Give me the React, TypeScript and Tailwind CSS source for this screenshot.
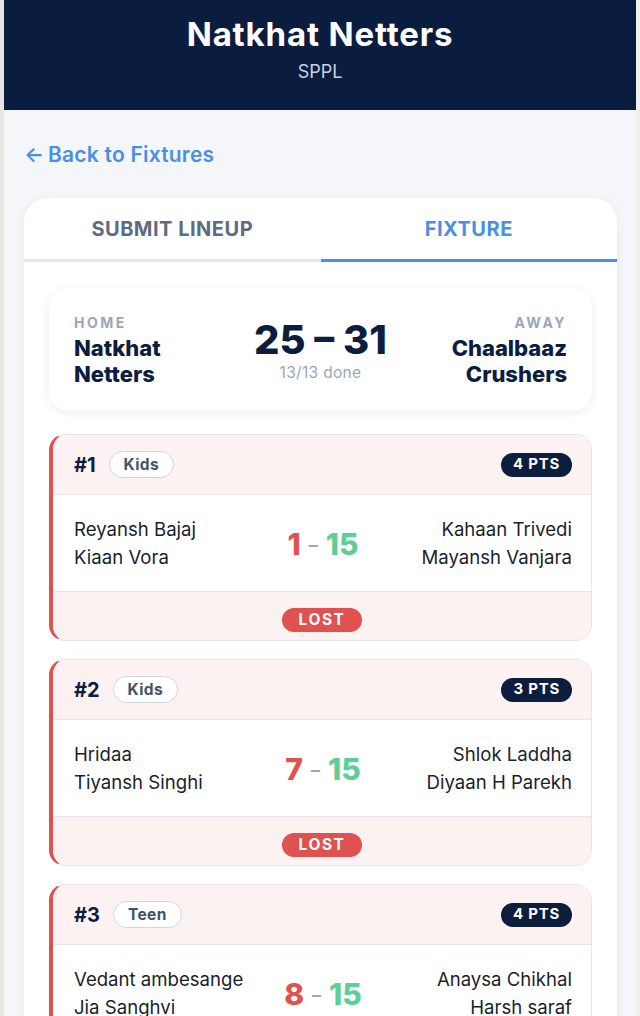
const FONT = { fontFamily: 'Inter, "Noto Sans", sans-serif' };

interface Match {
  no: number;
  cat: string;
  pts: number;
  home: string[];
  away: string[];
  hs: number;
  as: number;
  result: string;
}

const MATCHES: Match[] = [
  { no: 1, cat: 'Kids', pts: 4, home: ['Reyansh Bajaj', 'Kiaan Vora'], away: ['Kahaan Trivedi', 'Mayansh Vanjara'], hs: 1, as: 15, result: 'LOST' },
  { no: 2, cat: 'Kids', pts: 3, home: ['Hridaa', 'Tiyansh Singhi'], away: ['Shlok Laddha', 'Diyaan H Parekh'], hs: 7, as: 15, result: 'LOST' },
  { no: 3, cat: 'Teen', pts: 4, home: ['Vedant ambesange', 'Jia Sanghvi'], away: ['Anaysa Chikhal', 'Harsh saraf'], hs: 8, as: 15, result: 'LOST' },
];

function MatchCard({ m }: { m: Match }) {
  return (
    <div className="rounded-2xl border border-[#e2e6ee] border-l-4 border-l-[#e0524f] overflow-hidden bg-white">
      {/* header */}
      <div className="h-[60px] bg-[#fdf2f2] border-b border-[#e2e6ee] flex items-center pl-[21px] pr-[19px]">
        <span className="text-[20px] font-bold text-[#0c1d3d]">#{m.no}</span>
        <span className="ml-[13px] h-[27px] px-[14px] rounded-full border border-[#cfd6e2] bg-white flex items-center text-[15.5px] font-bold text-[#44536b] tracking-wide">
          {m.cat}
        </span>
        <span className="ml-auto h-[24px] px-[12px] rounded-full bg-[#0c1d3d] flex items-center text-[15px] font-bold text-white tracking-wider">
          {m.pts} PTS
        </span>
      </div>
      {/* body */}
      <div className="h-[96px] flex items-center pl-[21px] pr-[19px]">
        <div className="flex-1 text-[18.6px] leading-[28px] text-[#1a1f2b]">
          {m.home.map((n) => (
            <div key={n}>{n}</div>
          ))}
        </div>
        <div className="flex items-center gap-[8px] text-[30px] font-extrabold pt-[3px]">
          <span className="text-[#e0524f]">{m.hs}</span>
          <span className="text-[18px] font-semibold text-[#9aa6bb]">–</span>
          <span className="text-[#5ccf96]">{m.as}</span>
        </div>
        <div className="flex-1 text-right text-[18.6px] leading-[28px] text-[#1a1f2b]">
          {m.away.map((n) => (
            <div key={n}>{n}</div>
          ))}
        </div>
      </div>
      {/* footer */}
      <div className="h-[49px] bg-[#fdf2f2] border-t border-[#e2e6ee] flex justify-center pt-[16px]">
        <span className="h-[24px] px-[17px] rounded-full bg-[#e0524f] flex items-center text-[15.5px] font-bold text-white tracking-[0.1em]">
          {m.result}
        </span>
      </div>
    </div>
  );
}

export default function App() {
  return (
    <div className="flex h-[1016px] overflow-hidden bg-[#f5f6fa]" style={FONT}>
      <div className="w-[4px] shrink-0 bg-[#e6e6e3]" />
      <div className="w-[632px] shrink-0 flex flex-col">
        {/* Header */}
        <header className="h-[110px] shrink-0 bg-[#0a1d3e] flex flex-col items-center pt-[12px]">
          <h1 className="text-[33px] leading-[44px] font-bold text-white tracking-wide">Natkhat Netters</h1>
          <p className="mt-[2px] text-[18px] text-[#c9d1de]">SPPL</p>
        </header>

        <div className="px-[20px]">
          {/* Back */}
          <a className="mt-[31px] flex items-center gap-[4px] text-[21px] leading-[28px] font-semibold text-[#4a8fe6]">
            <span>←</span>
            <span className="tracking-[0.01em]">Back to Fixtures</span>
          </a>

          {/* Card */}
          <div className="mt-[29px] w-[593px] bg-white rounded-t-[24px] shadow-[0_2px_12px_rgba(15,30,60,0.06)] min-h-[820px]">
            <div className="flex h-[64px]">
              <div className="flex-1 flex items-center justify-center border-b-[3px] border-[#e2e8f0] text-[20px] font-bold text-[#5d6b82] tracking-wide">
                SUBMIT LINEUP
              </div>
              <div className="flex-1 flex items-center justify-center border-b-[3px] border-[#4a8fe6] text-[20px] font-bold text-[#4a8fe6] tracking-wide">
                FIXTURE
              </div>
            </div>

            <div className="px-[25px] pt-[26px] flex flex-col gap-[18px]">
              {/* Scoreboard */}
              <div className="h-[123px] mb-[5px] rounded-[20px] bg-white shadow-[0_2px_10px_rgba(15,30,60,0.08)] flex items-center px-[25px]">
                <div className="flex-1">
                  <div className="text-[14px] font-bold tracking-[0.18em] text-[#9aa6bb]">HOME</div>
                  <div className="mt-[2px] text-[22px] leading-[26px] font-extrabold text-[#0c1d3d]">
                    Natkhat
                    <br />
                    Netters
                  </div>
                </div>
                <div className="flex flex-col items-center">
                  <div className="mt-[4px] text-[40px] leading-[44px] font-extrabold text-[#0c1d3d]">25 – 31</div>
                  <div className="-mt-[1px] text-[15.5px] tracking-[0.02em] text-[#9aa6bb]">13/13 done</div>
                </div>
                <div className="flex-1 text-right">
                  <div className="text-[14px] font-bold tracking-[0.18em] text-[#9aa6bb]">AWAY</div>
                  <div className="mt-[2px] text-[22px] leading-[26px] font-extrabold text-[#0c1d3d]">
                    Chaalbaaz
                    <br />
                    Crushers
                  </div>
                </div>
              </div>

              {MATCHES.map((m) => (
                <MatchCard key={m.no} m={m} />
              ))}
            </div>
          </div>
        </div>
      </div>
      <div className="flex-1 bg-[#f0f0ed]" />
    </div>
  );
}
